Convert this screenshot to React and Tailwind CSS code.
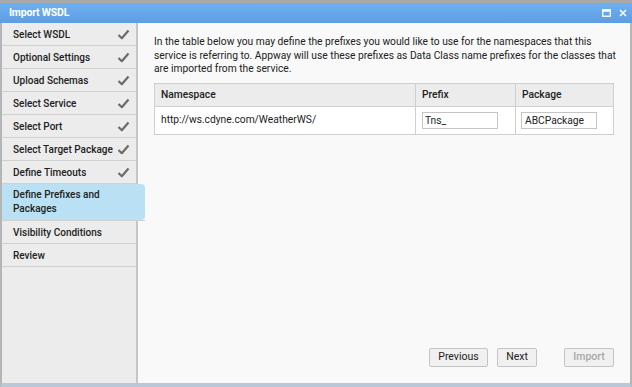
import { useState } from 'react';

const STEPS = [
  { label: 'Select WSDL', done: true },
  { label: 'Optional Settings', done: true },
  { label: 'Upload Schemas', done: true },
  { label: 'Select Service', done: true },
  { label: 'Select Port', done: true },
  { label: 'Select Target Package', done: true },
  { label: 'Define Timeouts', done: true },
  { label: 'Define Prefixes and Packages', active: true },
  { label: 'Visibility Conditions' },
  { label: 'Review' },
];

const Check = () => (
  <svg width="13" height="11" viewBox="0 0 13 11" className="shrink-0">
    <path d="M1.5 6 L4.8 9.2 L11.5 1.5" fill="none" stroke="#6b6b6b" strokeWidth="2.2" strokeLinejoin="round" />
  </svg>
);

const StepItem = ({ step }) => {
  if (step.active) {
    return (
      <div className="relative h-[37px] -mr-[9px] border-b border-[#d0d0d0]">
        <div className="absolute inset-0 rounded-r-[4px] bg-[#b9e1f3] pl-[11px] pt-[4px] pr-3 leading-[14px] font-medium text-[#222]">
          Define Prefixes and
          <br />
          Packages
        </div>
      </div>
    );
  }
  return (
    <div className="flex h-[23px] items-center justify-between border-b border-[#d0d0d0] pl-[11px] pr-[6px] font-medium text-[#222]">
      <span className="whitespace-nowrap">{step.label}</span>
      {step.done && <Check />}
    </div>
  );
};

const Button = ({ children, disabled, className = '' }) => (
  <button
    className={`h-[19px] rounded-[2px] border border-[#c4c4c4] bg-[#f0f0f0] text-[10.5px] leading-none ${disabled ? 'text-[#a8a8a8] font-medium' : 'text-[#222]'} ${className}`}
  >
    {children}
  </button>
);

export default function App() {
  const [prefix, setPrefix] = useState('Tns_');
  const [pkg, setPkg] = useState('ABCPackage');

  return (
    <div
      className="flex h-[387px] w-[632px] flex-col bg-[#a9a9a9] pt-[3px] text-[10.25px]"
      style={{ fontFamily: 'Roboto, "Liberation Sans", sans-serif' }}
    >
      <div className="flex h-[20px] items-center justify-between bg-gradient-to-b from-[#6db0f2] to-[#5e9de0] pl-[9px] pr-[5px] text-[10.5px]">
        <span className="font-bold text-white tracking-[-0.2px]">Import WSDL</span>
        <div className="flex items-center gap-[8px]">
          <svg width="9" height="8" viewBox="0 0 9 8">
            <rect x="0.75" y="0.75" width="7.5" height="6.5" fill="none" stroke="white" strokeWidth="1.3" />
            <rect x="0.75" y="0.75" width="7.5" height="2" fill="white" />
          </svg>
          <svg width="8" height="8" viewBox="0 0 8 8">
            <path d="M1 1 L7 7 M7 1 L1 7" stroke="white" strokeWidth="1.5" />
          </svg>
        </div>
      </div>
      <div className="flex flex-1 min-h-0 border-l-2 border-r-2 border-b-[4px] border-l-[#b5b5b5] border-r-[#b5b5b5] border-b-[#b9c7d6]">
        <div className="w-[136px] shrink-0 border-r-2 border-[#c6c6c6] bg-[#ececec] text-[10px]">
          {STEPS.map((s) => (
            <StepItem key={s.label} step={s} />
          ))}
        </div>
        <div className="flex flex-1 flex-col bg-[#f9f9f9] pl-[16px] pr-[16px] pt-[12px] text-[#222]">
          <p className="-mr-[6px] leading-[13.5px]">
            In the table below you may define the prefixes you would like to use for the namespaces that this
            service is referring to. Appway will use these prefixes as Data Class name prefixes for the classes that
            are imported from the service.
          </p>
          <table className="mt-[7px] w-[460px] border-collapse border border-[#cfcfcf]">
            <thead>
              <tr className="h-[23px] bg-[#ececec] text-left">
                <th className="w-[261px] border border-[#cfcfcf] pl-[6px] font-medium">Namespace</th>
                <th className="w-[100px] border border-[#cfcfcf] pl-[6px] font-medium">Prefix</th>
                <th className="border border-[#cfcfcf] pl-[6px] font-medium">Package</th>
              </tr>
            </thead>
            <tbody>
              <tr className="h-[28px] bg-white">
                <td className="border border-[#cfcfcf] pl-[6px]">http://ws.cdyne.com/WeatherWS/</td>
                <td className="border border-[#cfcfcf] pl-[6px]">
                  <input
                    value={prefix}
                    onChange={(e) => setPrefix(e.target.value)}
                    className="h-[17px] w-[76px] border border-[#c4c4c4] bg-white px-[2px] text-[10.25px] outline-none"
                  />
                </td>
                <td className="border border-[#cfcfcf] pl-[5px]">
                  <input
                    value={pkg}
                    onChange={(e) => setPkg(e.target.value)}
                    className="h-[17px] w-[76px] border border-[#c4c4c4] bg-white px-[3px] text-[10.25px] outline-none"
                  />
                </td>
              </tr>
            </tbody>
          </table>
          <div className="mt-auto mb-[16px] flex items-center justify-end">
            <Button className="w-[59px]">Previous</Button>
            <Button className="ml-[9px] w-[40px]">Next</Button>
            <Button disabled className="ml-[27px] w-[50px]">Import</Button>
          </div>
        </div>
      </div>
    </div>
  );
}
